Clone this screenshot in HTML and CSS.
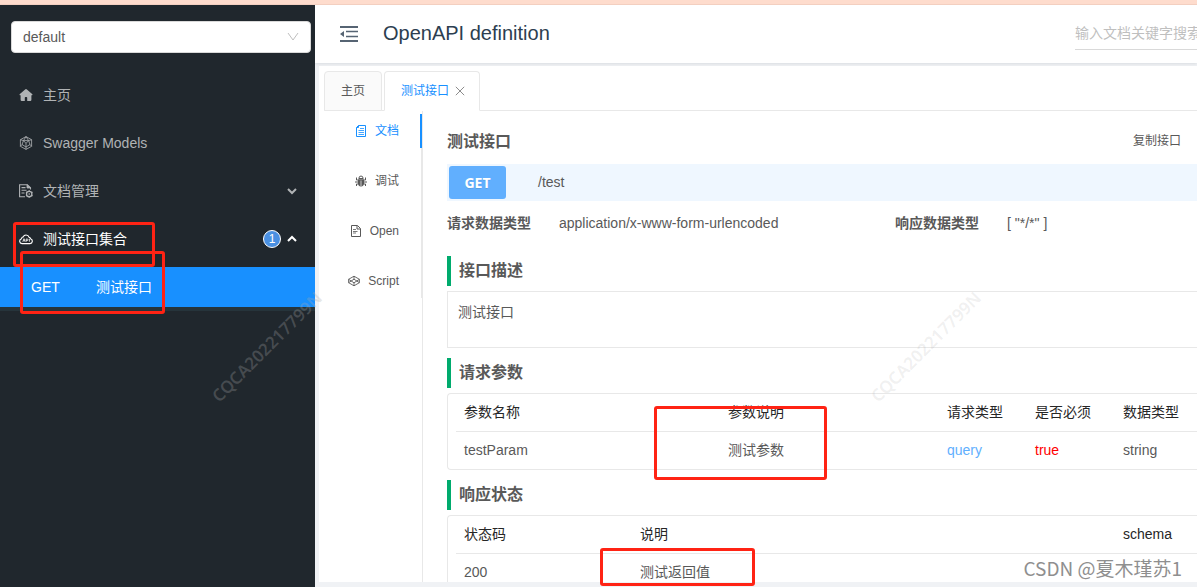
FILE: index.html
```html
<!DOCTYPE html>
<html lang="zh-CN">
<head>
<meta charset="utf-8">
<title>OpenAPI definition</title>
<link rel="stylesheet" href="styles.css">
</head>
<body>
<div class="app">
  <div class="notice"></div>
  <aside class="sidebar">
    <div class="group-select">
      <select aria-label="分组"><option>default</option></select>
      <svg class="select-arrow" viewBox="0 0 12 12"><path d="M1 2l5 7 5-7"/></svg>
    </div>
    <nav class="menu">
      <a class="menu-item" href="#home">
        <svg class="icon" viewBox="0 0 14 14"><path fill="currentColor" d="M7 1q.5 0 .9.400L13.400 6.200q.3.800-.4 1H12.400V11.800q0 1.200-1.200 1.200H8.200V9.800q0-.8-.7-.8h-1q-.7 0-.7.800V13H2.800q-1.200 0-1.200-1.200V7.200H1q-.7-.2-.4-1L6.100 1.400Q6.500 1 7 1z"/></svg>
        <span>主页</span>
      </a>
      <a class="menu-item" href="#models">
        <svg class="icon line" viewBox="0 0 14 14"><path d="M7 .6l5.600 3.100v6.600L7 13.400l-5.600-3.100V3.700zM7 .6L4.500 4.600 1.400 3.700M7 .6l2.600 4 3-.9M4.500 4.600h5.100L11 8.500 7 11 3 8.500zM3 8.500l-1.600 1.800M11 8.500l1.600 1.800M7 11v2.400M4.500 4.600L7 7.400l2.600-2.800M7 7.400V11"/></svg>
        <span>Swagger Models</span>
      </a>
      <a class="menu-item" href="#docs">
        <svg class="icon line" viewBox="0 0 14 14"><path stroke-width="1.100" d="M6 12.800H.600V.700H8.300L11.500 3.800V5.500M2.500 3.600h4M2.500 6.300h5M2.500 9h3"/><path fill="currentColor" d="M8 .7v3.300h3.500z"/><circle cx="10.200" cy="10" r="2.700" stroke-width="1.300"/><circle cx="10.200" cy="10" r=".5"/><path stroke-width="1.300" d="M10.200 6.300v1M10.200 12.700v1M7 8.200l1 .5M12.500 11.300l1 .5M7 11.800l1-.5M12.500 8.700l1-.5"/></svg>
        <span>文档管理</span>
        <svg class="caret" viewBox="0 0 10 10"><path d="M1 3l4 4 4-4"/></svg>
      </a>
      <a class="menu-item open" href="#group">
        <svg class="icon line" viewBox="0 0 14 14"><path stroke-width="1.100" d="M3 11.600h8a2.500 2.500 0 0 0 .5-4.900Q11.200 5.600 10.200 5.400 9.400 3 7 3 4.900 3 4.200 4.900 2.700 5 2.500 6.700a2.500 2.500 0 0 0 .5 4.900z"/><path d="M3.800 9.700l1.200-3 1.200 3M4.300 8.800h1.500M7.200 9.700V7h.9q.9 0 .9.800t-.9.800h-.9M10.400 6.900v2.800"/></svg>
        <span>测试接口集合</span>
        <span class="badge">1</span>
        <svg class="caret" viewBox="0 0 10 10"><path d="M1 7l4-4 4 4"/></svg>
      </a>
      <div class="submenu">
        <a class="submenu-item" href="#test"><span class="method">GET</span><span>测试接口</span></a>
      </div>
    </nav>
  </aside>

  <div class="main">
    <header class="header">
      <button class="fold" aria-label="收起菜单">
        <svg viewBox="0 0 18 16"><path d="M0 0h18v2H0zM6 4.700h12v1.600H6zM6 9.700h12v1.600H6zM0 14h18v2H0zM0 8l4-3v6z" fill="currentColor"/></svg>
      </button>
      <h1>OpenAPI definition</h1>
      <input class="search" type="text" placeholder="输入文档关键字搜索" aria-label="搜索">
    </header>

    <div class="panel">
      <div class="tabs">
        <button class="tab">主页</button>
        <button class="tab active">测试接口
          <svg viewBox="0 0 10 10"><path d="M.8.8l8.400 8.400M9.200.8L.8 9.200"/></svg>
        </button>
      </div>
      <div class="body">
        <nav class="side-tabs">
          <a class="side-tab active" href="#doc">
            <svg class="small-icon" viewBox="0 0 12 12"><path d="M3.500.5h7v11h-9v-9zM3.500.5v2h-2"/><path stroke-width=".8" d="M5 3.500h4M3.500 5.500H9M3.500 7.500H9M3.500 9.500H9"/></svg>文档</a>
          <a class="side-tab" href="#debug">
            <svg class="small-icon" viewBox="0 0 12 12"><path fill="currentColor" stroke="none" d="M3 4.300h6v4.200q0 2.700-3 3-3-.3-3-3z"/><path d="M3.800 3.500Q4 1 6 1t2.200 2.500zM3 5H1.500V2.500M9 5h1.500V2.500M3 7H0M9 7h3M3 9H1.500v2M9 9h1.500v2"/><path stroke="#fff" stroke-width=".7" d="M6 5.500V11"/></svg>调试</a>
          <a class="side-tab" href="#open">
            <svg class="small-icon" viewBox="0 0 12 12"><path d="M1.500.5h6l3 3v8h-9zM7 .8v3.200h3.300"/><path stroke-width=".8" d="M3 4.500h3M3 6.500h4.500M3 8h3"/></svg>Open</a>
          <a class="side-tab" href="#script">
            <svg class="small-icon" viewBox="0 0 12 12"><path stroke-width=".9" d="M6 1.200l5.400 3.100v3.400L6 10.800.6 7.700V4.300zM6 1.200v3M6 7.800v3M.6 4.300L6 7.800l5.400-3.500M.6 7.700L6 4.200l5.400 3.500"/></svg>Script</a>
        </nav>

        <main class="content">
          <div class="title-row">
            <h2>测试接口</h2>
            <button class="copy">复制接口</button>
          </div>
          <div class="endpoint"><span class="verb">GET</span><span>/test</span></div>
          <dl class="types">
            <div><dt>请求数据类型</dt><dd>application/x-www-form-urlencoded</dd></div>
            <div><dt>响应数据类型</dt><dd>[ "*/*" ]</dd></div>
          </dl>

          <h3>接口描述</h3>
          <div class="box description">测试接口</div>

          <h3>请求参数</h3>
          <div class="box">
            <table class="params">
              <thead><tr><th class="c-name">参数名称</th><th>参数说明</th><th class="c-short">请求类型</th><th class="c-short">是否必须</th><th class="c-last">数据类型</th></tr></thead>
              <tbody><tr><td>testParam</td><td>测试参数</td><td class="query">query</td><td class="required">true</td><td>string</td></tr></tbody>
            </table>
          </div>

          <h3>响应状态</h3>
          <div class="box">
            <table class="responses">
              <thead><tr><th class="c-code">状态码</th><th>说明</th><th class="c-last">schema</th></tr></thead>
              <tbody><tr><td>200</td><td>测试返回值</td><td></td></tr></tbody>
            </table>
          </div>
        </main>
      </div>
    </div>
  </div>

  <div class="mark mark-group"></div>
  <div class="mark mark-item"></div>
  <div class="mark mark-param"></div>
  <div class="mark mark-return"></div>
  <div class="watermark watermark-left">CQCA202217799N</div>
  <div class="watermark watermark-right">CQCA202217799N</div>
  <div class="credit">CSDN @夏木瑾苏1</div>
</div>
</body>
</html>
```

FILE: styles.css
```css
* { box-sizing: border-box; }

body {
  margin: 0;
  font: 14px/21px "Liberation Sans", "Noto Sans CJK SC", sans-serif;
  color: #595959;
}

a { color: inherit; text-decoration: none; }
h1, h2, h3, dl, dd { margin: 0; }
button, input, select { font: inherit; color: inherit; }
button { padding: 0; border: 0; background: none; }
svg { flex: none; }

.app {
  position: relative;
  display: grid;
  grid-template: 5px minmax(0, 1fr) / 315px minmax(0, 1fr);
  height: 100vh;
  overflow: hidden;
  background: #f0f2f5;
}

.notice {
  grid-column: 1 / -1;
  background: #fedccd;
  border-bottom: 1px solid #f3cfc0;
}

/* Sidebar */
.sidebar { background: #20272d; color: #b0b3b5; }

.group-select {
  position: relative;
  margin: 16px 4px 22px 11px;
}

.group-select select {
  display: block;
  width: 100%;
  height: 32px;
  padding: 0 11px;
  border: 1px solid #d9d9d9;
  border-radius: 4px;
  background: #fff;
  color: #595959;
  appearance: none;
}

.select-arrow {
  position: absolute;
  top: 10px;
  right: 12px;
  width: 12px;
  height: 12px;
  fill: none;
  stroke: #bfbfbf;
}

.menu { display: flex; flex-direction: column; gap: 8px; }

.menu-item {
  display: flex;
  align-items: center;
  height: 40px;
  padding: 0 18px 0 19px;
}

.menu-item.open { color: #fff; }
.icon { width: 14px; height: 14px; margin-right: 10px; }
.line { fill: none; stroke: currentColor; stroke-width: .8; }

.caret {
  width: 10px;
  height: 10px;
  margin-left: auto;
  fill: none;
  stroke: currentColor;
  stroke-width: 2;
}

.badge {
  width: 18px;
  height: 18px;
  margin-left: auto;
  border: 1px solid #fff;
  border-radius: 9px;
  background: #4a90e2;
  font-size: 12px;
  line-height: 16px;
  text-align: center;
}

.badge + .caret { margin-left: 6px; }
.submenu { border-bottom: 4px solid #26343b; }

.submenu-item {
  display: flex;
  align-items: center;
  height: 40px;
  padding-left: 31px;
  background: #1890ff;
  color: #fff;
}

.method { width: 65px; }

/* Header */
.main { display: flex; flex-direction: column; min-width: 0; overflow: hidden; }

.header {
  display: flex;
  align-items: center;
  flex: none;
  height: 58px;
  padding: 0 0 2px 25px;
  background: #fff;
  box-shadow: 0 1px 3px #d9dce0;
}

.fold { padding-top: 2px; color: #566473; }
.fold svg { display: block; width: 18px; height: 16px; }

.header h1 {
  margin-left: 25px;
  font-size: 20px;
  font-weight: 400;
  line-height: 28px;
  color: #2c3e50;
}

.search {
  width: 122px;
  height: 33px;
  margin-left: auto;
  padding: 0;
  border: 0;
  border-bottom: 1px solid #d9d9d9;
  background: none;
}

.search::placeholder { color: #bfbfbf; }

/* Tabs */
.panel {
  display: flex;
  flex: 1;
  flex-direction: column;
  min-height: 0;
  margin: 3px 0 5px 4px;
  padding: 5px 0 0 5px;
  overflow: hidden;
  background: #fff;
}

.tabs {
  display: flex;
  flex: none;
  gap: 2px;
  height: 40px;
  border-bottom: 1px solid #e8e8e8;
}

.tab {
  display: flex;
  align-items: center;
  gap: 6px;
  height: 40px;
  padding: 0 16px;
  border: 1px solid #e8e8e8;
  border-radius: 4px 4px 0 0;
  background: #fafafa;
  font-size: 12px;
}

.tab.active {
  padding-right: 14px;
  border-bottom-color: #fff;
  background: #fff;
  color: #1890ff;
}

.tab svg { width: 10px; height: 10px; fill: none; stroke: #8c8c8c; }

.body { display: flex; flex: 1; min-height: 0; }

.side-tabs {
  display: flex;
  flex: none;
  flex-direction: column;
  gap: 16px;
  align-self: flex-start;
  width: 98px;
  margin-top: 3px;
  border-right: 1px solid #e8e8e8;
}

.side-tab {
  display: flex;
  align-items: center;
  justify-content: flex-end;
  gap: 8px;
  height: 34px;
  padding-right: 22px;
  font-size: 12px;
}

.side-tab.active {
  margin-right: -1px;
  padding-right: 21px;
  border-right: 2px solid #1890ff;
  color: #1890ff;
}

.small-icon {
  width: 12px;
  height: 12px;
  fill: none;
  stroke: currentColor;
  stroke-width: 1;
}

/* Document */
.content {
  flex: 1;
  min-width: 0;
  padding: 15px 0 0 24px;
  border-left: 1px solid #e8e8e8;
}

.title-row {
  display: flex;
  align-items: center;
  justify-content: space-between;
  height: 30px;
  margin-bottom: 8px;
  padding-right: 16px;
}

.title-row h2, .content h3 { font-size: 16px; font-weight: 600; }
.copy { font-size: 12px; }

.endpoint {
  display: flex;
  align-items: center;
  gap: 32px;
  height: 37px;
  padding-left: 2px;
  background: #eff7ff;
}

.verb {
  width: 57px;
  border-radius: 3px;
  background: #61affe;
  color: #fff;
  font: 700 14px/33px "Noto Sans", sans-serif;
  text-align: center;
  text-shadow: 0 1px 0 rgba(0, 0, 0, .1);
}

.types {
  display: grid;
  grid-template-columns: 448px 1fr;
  margin: 12px 0 22px;
}

.types div { display: flex; gap: 28px; }
.types dt { font-weight: 600; }

.content h3 {
  margin: 10px 0 5px;
  padding-left: 8px;
  border-left: 4px solid #00ab6d;
  line-height: 30px;
}

.box {
  padding-left: 8px;
  border: 1px solid #e8e8e8;
  border-right: 0;
  border-radius: 4px 0 0 4px;
}

.description { min-height: 57px; padding: 10px; border-radius: 0; }

table { width: 100%; table-layout: fixed; border-spacing: 0; }
th, td { padding: 8px; text-align: left; }
th { border-bottom: 1px solid #e8e8e8; font-weight: 400; color: #262626; }
.c-name { width: 264px; }
.c-short { width: 88px; }
.c-code { width: 176px; }
.c-last { width: 82px; }
.query { color: #61affe; }
.required { color: #f00; }

/* Overlays */
.mark {
  position: absolute;
  border: 3px solid #ff2314;
  border-radius: 3px;
}

.mark-group { left: 13px; top: 222px; width: 142px; height: 45px; }
.mark-item { left: 20px; top: 251px; width: 145px; height: 63px; }
.mark-param { left: 654px; top: 406px; width: 173px; height: 74px; }
.mark-return { left: 600px; top: 548px; width: 155px; height: 38px; }

.watermark {
  position: absolute;
  top: 335px;
  width: 160px;
  font: 600 17px/24px "Noto Sans", sans-serif;
  text-align: center;
  transform: rotate(-45deg);
  pointer-events: none;
}

.watermark-left { left: 187px; color: rgba(170, 170, 170, .28); }
.watermark-right { left: 846px; color: rgba(150, 150, 150, .15); }

.credit {
  position: absolute;
  right: 15px;
  bottom: 7px;
  color: #8f8f8f;
  font: 19px/24px "Noto Sans CJK SC", sans-serif;
}
```
